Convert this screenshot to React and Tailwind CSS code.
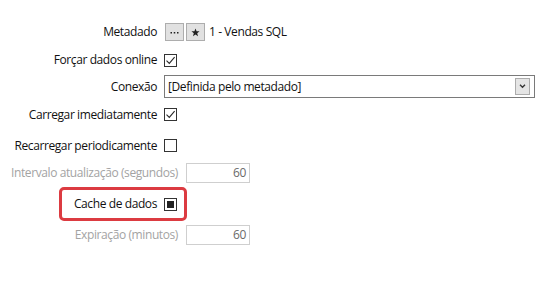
import React from 'react';

const Check = () => (
  <svg viewBox="0 0 11 11" className="w-[11px] h-[11px]">
    <path d="M1.5 5.6 L4.3 8.4 L9.6 2.2" fill="none" stroke="#2a2a2a" strokeWidth="1.1" />
  </svg>
);

const Checkbox = ({ checked, filled }) => (
  <div className="w-[13px] h-[13px] border border-[#333] bg-white flex items-center justify-center shrink-0">
    {checked && <Check />}
    {filled && <div className="w-[7px] h-[7px] bg-[#222]" />}
  </div>
);

const Label = ({ children, w = 'w-[157px]', muted }) => (
  <div className={`${w} text-right whitespace-nowrap shrink-0 ${muted ? 'text-[#a3a3a3]' : 'text-[#111]'}`}>{children}</div>
);

export default function App() {
  return (
    <div className="w-[539px] h-[306px] bg-white text-[12px] leading-none tracking-[-0.4px] pt-[23px]" style={{ fontFamily: '"Open Sans", "Noto Sans", sans-serif' }}>
      {/* METADADO */}
      <div className="flex items-center h-[18px]">
        <Label>Metadado</Label>
        <div className="ml-[8px] w-[19px] h-[18px] bg-[#e1e1e1] border border-[#adadad] flex items-center justify-center">
          <svg viewBox="0 0 9 3" className="w-[9px] h-[3px]">
            <rect x="0.5" y="1" width="1.5" height="1.5" fill="#222" />
            <rect x="3.75" y="1" width="1.5" height="1.5" fill="#222" />
            <rect x="7" y="1" width="1.5" height="1.5" fill="#222" />
          </svg>
        </div>
        <div className="ml-[2px] w-[19px] h-[18px] bg-[#e1e1e1] border border-[#adadad] flex items-center justify-center">
          <svg viewBox="0 0 10 10" className="w-[9px] h-[9px]">
            <path d="M5 0.5 L6.2 3.6 L9.5 3.7 L6.9 5.8 L7.8 9.2 L5 7.3 L2.2 9.2 L3.1 5.8 L0.5 3.7 L3.8 3.6 Z" fill="#222" />
          </svg>
        </div>
        <span className="ml-[4px] text-[#111]">1 - Vendas SQL</span>
      </div>

      {/* FORÇAR */}
      <div className="flex items-center h-[26px] mt-[6px]">
        <Label>Forçar dados online</Label>
        <div className="ml-[7px]"><Checkbox checked /></div>
      </div>

      {/* CONEXAO */}
      <div className="flex items-center h-[23px] mt-[2px]">
        <Label>Conexão</Label>
        <div className="ml-[7px] w-[371px] h-[23px] border border-[#7a7a7a] bg-white flex items-center pl-[3px] pr-[4px]">
          <span className="flex-1 text-[#111]">[Definida pelo metadado]</span>
          <div className="w-[15px] h-[17px] bg-[#e5e5e5] border border-[#acacac] flex items-center justify-center">
            <svg viewBox="0 0 8 6" className="w-[7px] h-[5px]">
              <path d="M1 1 L4 4 L7 1" fill="none" stroke="#333" strokeWidth="1.6" />
            </svg>
          </div>
        </div>
      </div>

      {/* CARREGAR */}
      <div className="flex items-center h-[25px] mt-[4px]">
        <Label>Carregar imediatamente</Label>
        <div className="ml-[7px]"><Checkbox checked /></div>
      </div>

      {/* RECARREGAR */}
      <div className="flex items-center h-[25px] mt-[6px]">
        <Label>Recarregar periodicamente</Label>
        <div className="ml-[7px]"><Checkbox /></div>
      </div>

      {/* INTERVALO */}
      <div className="flex items-center h-[20px] mt-[5px]">
        <Label w="w-[178px]" muted>Intervalo atualização (segundos)</Label>
        <div className="ml-[8px] w-[64px] h-[20px] border border-[#cfcfcf] flex items-center justify-end pr-[3px] text-[#6a6a6a]">60</div>
      </div>

      {/* CACHE */}
      <div className="flex mt-[4px]">
        <div className="ml-[59px] h-[34px] border-[3px] border-[#dc3b41] rounded-[5px] flex items-center pr-[7px]">
          <Label w="w-[95px]">Cache de dados</Label>
          <div className="ml-[7px]"><Checkbox filled /></div>
        </div>
      </div>

      {/* EXPIRACAO */}
      <div className="flex items-center h-[20px] mt-[4px]">
        <Label w="w-[178px]" muted>Expiração (minutos)</Label>
        <div className="ml-[8px] w-[64px] h-[20px] border border-[#cfcfcf] flex items-center justify-end pr-[3px] text-[#6a6a6a]">60</div>
      </div>
    </div>
  );
}
